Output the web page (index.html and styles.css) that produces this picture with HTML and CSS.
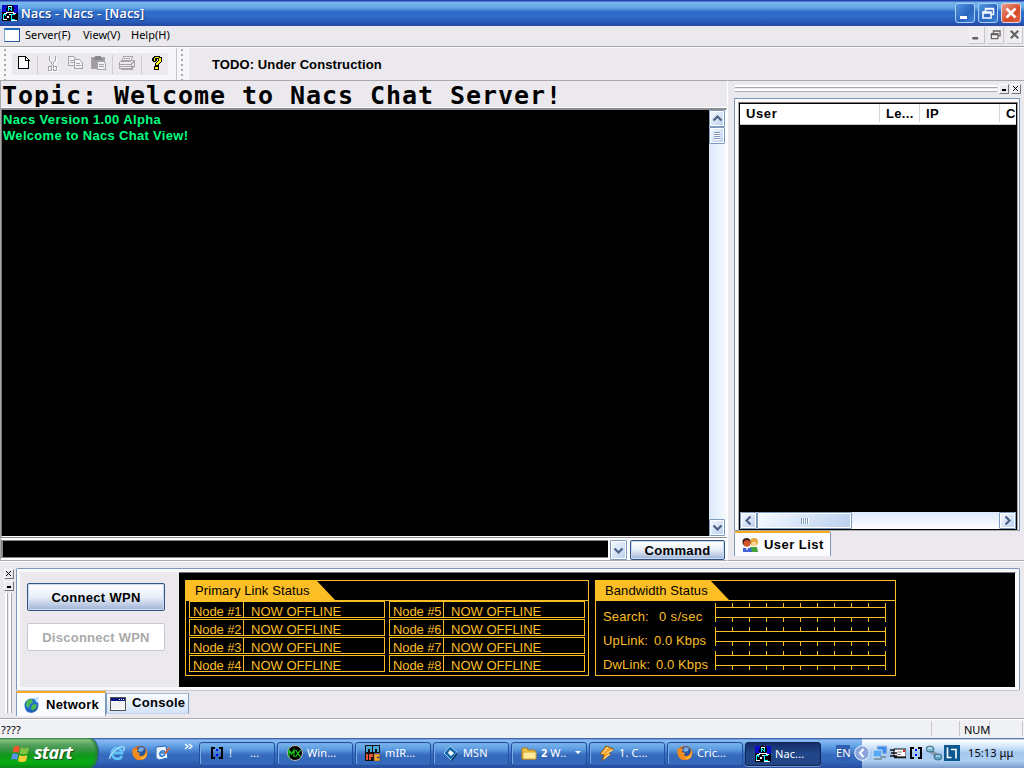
FILE: index.html
```html
<!DOCTYPE html>
<html lang="en">
<head>
<meta charset="utf-8">
<title>Nacs - Nacs - [Nacs]</title>
<link rel="stylesheet" href="styles.css">
</head>
<body>
<svg width="0" height="0" class="defs">
  <defs>
    <symbol id="nacs" viewBox="0 0 16 16"><rect width="16" height="16" fill="#0a0ac8"/><path d="M0 12h16v4H0zM5 0h6v2h1v4h-1v4H6V6H4V3h1z" fill="#000"/><path d="M0 7h5l2 3h3l2-2h4v8H0z" fill="#000"/><path d="M6 1h4v1H6zM4 7h8v1H4zM2 8h3v1H2zM11 8h3v1h-3zM1 14h4v1H1zM9 15h6v1H9zM7 9h2v1H7zM5 11h2v2H5z" fill="#fff"/><path d="M6 2h1v4H6zM7 3h1v1H7zM8 4h1v1H8zM9 2h1v4H9zM1 9h3v1H2v4H1zM3 10h1v1H3zM9 9h4v1h-3v4h3v1H9z" fill="#0ff"/></symbol>
    <symbol id="ff" viewBox="0 0 16 16"><circle cx="8" cy="8" r="7.3" fill="#e66b12"/><circle cx="9" cy="6.3" r="5" fill="#25579f"/><path d="M8 2l4 1-1 3-3 1-2-2z" fill="#77aae0"/><path d="M1 3l2 1 3 0-1 3 3 1-1 2c3 3 7 0 7-6 3 5 0 11-6 11C2 15-1 9 1 3z" fill="#f28b1d"/><path d="M13 4c3 5 0 9-5 9 4 3 9-3 5-9z" fill="#ffd24a"/></symbol>
    <symbol id="brk" viewBox="0 0 16 16"><path d="M2 2h4v2H4v8h2v2H2zM10 2h4v12h-4v-2h2V4h-2z" fill="#000"/><path d="M7 4h2v2H7zM7 9h2v2H7z" fill="#00f"/></symbol>
    <symbol id="min" viewBox="0 0 18 18"><path d="M4 12h7v3H4z" fill="currentColor"/></symbol>
    <symbol id="rest" viewBox="0 0 18 18"><path d="M6.500 8V4.500h8v6H12M6 5h9" fill="none" stroke="currentColor" stroke-width="1.500"/><path d="M4 8h8v6H4zM4 9h8" fill="none" stroke="currentColor" stroke-width="1.500"/></symbol>
    <symbol id="cls" viewBox="0 0 18 18"><path d="M4.500 4.500l9 9M13.500 4.500l-9 9" stroke="currentColor" stroke-width="2.600"/></symbol>
    <symbol id="up" viewBox="0 0 15 15"><path d="M3.500 9.500l4-4 4 4" fill="none" stroke="#4d6185" stroke-width="2.200"/></symbol>
    <symbol id="gauge" viewBox="0 0 171 19"><path d="M.5 0v19M170.500 0v19M0 4.500h171M0 14.500h171M17.500 0v5M34.500 0v5M51.500 0v5M68.500 0v5M85.500 0v5M102.500 0v5M119.500 0v5M136.500 0v5M153.500 0v5M17.500 14v5M34.500 14v5M51.500 14v5M68.500 14v5M85.500 14v5M102.500 14v5M119.500 14v5M136.500 14v5M153.500 14v5" stroke="#fbbe24" fill="none"/></symbol>
  </defs>
</svg>
<div class="screen">
  <header class="titlebar">
    <svg class="i16"><use href="#nacs"/></svg><span class="title">Nacs - Nacs - [Nacs]</span>
    <div class="winbtns"><b><svg><use href="#min"/></svg></b><b><svg><use href="#rest"/></svg></b><b class="red"><svg><use href="#cls"/></svg></b></div>
  </header>
  <nav class="menubar">
    <i class="doc"></i><span class="m1">Server(F)</span><span class="m2">View(V)</span><span class="m3">Help(H)</span>
    <div class="mdi"><b><svg><use href="#min"/></svg></b><b><svg><use href="#rest"/></svg></b><b><svg><use href="#cls"/></svg></b></div>
  </nav>
  <div class="toolbar">
    <div class="tools">
      <i class="dots"></i>
      <svg width="156" height="22" class="toolicons" shape-rendering="crispEdges">
        <path d="M6.500 3.500h7l3 3v9h-10z" fill="#fff" stroke="#000"/><path d="M13.500 3v4h4" fill="none" stroke="#000"/>
        <path d="M25.500 2v19M100.500 2v19M129.500 2v19" stroke="#cfcdd2"/>
        <g fill="none" stroke="#fff" transform="translate(1 1)"><path d="M37.500 3v4l4 6M43.500 3v4l-4 6M36.500 13.500h3v4h-3zM41.500 13.500h3v4h-3z"/></g>
        <g fill="none" stroke="#a6a4a8"><path d="M37.500 3v4l4 6M43.500 3v4l-4 6M36.500 13.500h3v4h-3zM41.500 13.500h3v4h-3z"/>
        <path d="M56.500 3.500h5l3 3v6h-8zM58 7.500h4M58 9.500h4" fill="#f2f1f4"/><path d="M62.500 6.500h5l3 3v6h-8zM64 10.500h4M64 12.500h5" fill="#f2f1f4"/>
        <path d="M79.500 4.500h13v11h-13z" fill="#a09ea2"/><path d="M83 3.500h6M82 5.500h8" stroke="#8a888c" stroke-width="2"/><path d="M85.500 8.500h6l2 2v6h-8zM87 11.500h5M87 13.500h5" fill="#f2f1f4"/>
        <path d="M111.500 3.500h9l-2 5h-9zM107.500 9.500l3-2h12l-3 4h-12zv6h12v-6M107 13.500h15M119.500 16l3-3v-5M112 5.500h6M109 16.500h12" fill="#efedf1"/></g>
        <path d="M142 3h6v1h2v5h-1v1h-1v1h-1v2h-4v-3h1V9h1V8h1V6h-1v2h-1v1h-3V8h-1V5h1V4h1zM142 13h5v4h-5z" fill="#000"/><path d="M142 4h5v1h2v4h-1v1h-1v1h-1v1h-2v-2h1V9h1V8h1V5h-4v3h-1V5h1zM143 14h3v2h-3z" fill="#ff0"/>
      </svg>
    </div>
    <i class="dots"></i><span class="todo">TODO: Under Construction</span>
  </div>
  <main class="main">
    <section class="chat">
      <h1 class="topic">Topic: Welcome to Nacs Chat Server!</h1>
      <div class="viewrow">
        <div class="log"><p class="l1">Nacs Version 1.00 Alpha</p><p class="l2">Welcome to Nacs Chat View!</p></div>
        <div class="vscroll"><i class="sb"><svg><use href="#up"/></svg></i><i class="sb thumb"></i><i class="sb end"><svg class="down"><use href="#up"/></svg></i></div>
      </div>
      <div class="cmdrow"><div class="input"></div><i class="sb combo"><svg class="down"><use href="#up"/></svg></i><button class="xp command">Command</button></div>
    </section>
    <aside class="users">
      <div class="grip"><div class="lines"></div><i class="tiny mn"></i><i class="tiny"><svg viewBox="0 0 10 10"><path d="M2 2l5 5M7 2l-5 5" stroke="#000"/></svg></i></div>
      <div class="upanel"><div class="ulist">
        <div class="cols"><span class="c1">User</span><span class="c2">Le...</span><span class="c3">IP</span><span class="c4">C</span></div>
        <div class="empty"></div>
        <div class="hscroll"><i class="sb"><svg class="left"><use href="#up"/></svg></i><i class="sb hthumb"></i><i class="sb end"><svg class="right"><use href="#up"/></svg></i></div>
      </div></div>
      <div class="tab utab"><svg class="i16" viewBox="0 0 16 16"><path d="M8 10h7l1 5H8z" fill="#43a33a"/><circle cx="12" cy="5" r="4" fill="#e6a83c"/><circle cx="12" cy="7" r="2.500" fill="#ffd68e"/><path d="M1 11h8l1 4H1z" fill="#3d62d8"/><circle cx="4.500" cy="5" r="4" fill="#442019"/><circle cx="5" cy="6.500" r="3.300" fill="#d4552a"/><path d="M4 11l1 3 1-3z" fill="#fff"/></svg><span>User List</span></div>
    </aside>
  </main>
  <section class="dock">
    <div class="sidegrip"><i class="tiny"><svg viewBox="0 0 10 10"><path d="M2 2l5 5M7 2l-5 5" stroke="#000"/></svg></i><i class="tiny mn"></i><div class="vlines"></div></div>
    <div class="dockbody">
      <div class="dpanel">
        <div class="btns"><button class="xp">Connect WPN</button><button class="xp off">Disconnect WPN</button></div>
        <div class="status">
          <div class="box link">
            <div class="head"><svg width="150" height="19"><path d="M0 0h131l18 19H0z" fill="#fbbe24"/></svg><span>Primary Link Status</span></div>
            <div class="nodes">
              <div><span>Node #1</span><em>NOW OFFLINE</em></div><div><span>Node #5</span><em>NOW OFFLINE</em></div>
              <div><span>Node #2</span><em>NOW OFFLINE</em></div><div><span>Node #6</span><em>NOW OFFLINE</em></div>
              <div><span>Node #3</span><em>NOW OFFLINE</em></div><div><span>Node #7</span><em>NOW OFFLINE</em></div>
              <div><span>Node #4</span><em>NOW OFFLINE</em></div><div><span>Node #8</span><em>NOW OFFLINE</em></div>
            </div>
          </div>
          <div class="box band">
            <div class="head"><svg width="136" height="19"><path d="M0 0h115l18 19H0z" fill="#fbbe24"/></svg><span>Bandwidth Status</span></div>
            <div class="rates">
              <div><span class="k s">Search:</span><span class="v1">0 s/sec</span><svg><use href="#gauge"/></svg></div>
              <div><span class="k">UpLink:</span><span class="v2">0.0 Kbps</span><svg><use href="#gauge"/></svg></div>
              <div><span class="k">DwLink:</span><span class="v3">0.0 Kbps</span><svg><use href="#gauge"/></svg></div>
            </div>
          </div>
        </div>
      </div>
      <div class="tabs">
        <div class="tab net"><svg class="i16" viewBox="0 0 16 16"><circle cx="7.500" cy="8.500" r="7" fill="#1f6ed0"/><path d="M3 3l5-1 1 4-3 1-1 4-3-2zM8 8l4-1 1 4-4 4-2-3z" fill="#4dbb52"/><path d="M9 1l6-1-2 6c-1-2-2-3-4-5z" fill="#b8e4fa"/><path d="M1 10c3 4 8 4 13-1 0 4-3 7-7 7S1 13 1 10z" fill="#174fae" fill-opacity=".6"/></svg><span>Network</span></div>
        <div class="tab con"><svg width="16" height="14" shape-rendering="crispEdges"><path d="M.5.500h15v13H.5z" fill="#fff" stroke="#555"/><path d="M1 1h14v3H1z" fill="#0a1580"/><path d="M9 2h1v1H9zM11 2h1v1h-1zM13 2h1v1h-1z" fill="#fff"/><path d="M1 5h14v7H1z" fill="#f3f3f3"/></svg><span>Console</span></div>
      </div>
    </div>
  </section>
  <div class="statusbar"><span class="q">????</span><i></i><span class="num">NUM</span><i class="last"></i></div>
  <footer class="taskbar">
    <div class="start"><svg width="19" height="19" viewBox="0 0 19 19"><path d="M3 3q3-2 6 0L7.500 9q-3-2-6 0z" fill="#f0562a"/><path d="M10 3.500q3 2 8 0L16.500 9.500q-4 2-8 0z" fill="#81c53c"/><path d="M1.300 10.500q3-2 6 0L6 16q-3-2-6 0z" fill="#5b8ff0"/><path d="M8.300 11q3 2 8 0L15 17q-4 2-8 0z" fill="#fbcf35"/></svg><span>start</span></div>
    <div class="quick">
      <svg class="i16" viewBox="0 0 16 16"><path d="M13 11c-3 5-10 3-10-3s9-7 10 0H5" fill="none" stroke="#62c2f5" stroke-width="2.800"/><path d="M1 14C-1 10 11 0 15 2c1 1 0 3-1 4" fill="none" stroke="#a8defc" stroke-width="1.300"/></svg>
      <svg class="i16"><use href="#ff"/></svg>
      <svg class="i16" viewBox="0 0 16 16"><path d="M1 2l10-1 2 12-9 2-3-2z" fill="#e9f4ff" stroke="#2a68b8"/><path d="M10 9c-2 4-6 2-5-1s5-3 5 0H6" fill="none" stroke="#2878cc" stroke-width="1.600"/><path d="M9 8l5-6 1 1-4 6z" fill="#d8642b"/></svg>
      <svg width="9" height="8" class="more"><path d="M1 1l3 2.500L1 6M5 1l3 2.500L5 6" fill="none" stroke="#fff" stroke-width="1.400"/></svg>
    </div>
    <div class="tasks">
      <div class="task"><svg class="i16"><use href="#brk"/></svg><span>!</span><span class="gap">...</span></div>
      <div class="task"><svg class="i16" viewBox="0 0 16 16"><circle cx="8" cy="8" r="7.500" fill="#000" stroke="#bbb"/><path d="M2 12V5l2.500 4L7 5v7M8.500 5l5 7M13.500 5l-5 7" fill="none" stroke="#18d818" stroke-width="1.200"/></svg><span>Win...</span></div>
      <div class="task"><svg class="i16" viewBox="0 0 16 16"><path d="M0 0h15v8H0z" fill="#111"/><path d="M1 1h6v6H5V4H3v3H1zM8 1h6v6h-2V4h-2v3H8z" fill="#4aa9d8"/><path d="M0 8h9v8H0z" fill="#111"/><path d="M1 9h2v6H1zM4 9h4v3H6v3H4z" fill="#e85236"/><path d="M9 9h6v3h-3v1h3v3H9z" fill="#f0a92e" stroke="#633" stroke-width=".5"/></svg><span>mIR...</span></div>
      <div class="task"><svg class="i16" viewBox="0 0 16 16"><path d="M7 1l7 6-6 8-7-7z" fill="#1567a8" stroke="#9ed8f7"/><path d="M7 5l4 3-3 3-3-3z" fill="#fff"/><path d="M8 15l6-8v3l-5 6z" fill="#0c3765"/></svg><span>MSN</span></div>
      <div class="task"><svg class="i16" viewBox="0 0 16 16"><path d="M1 3h5l1 2h7v9H1z" fill="#f2c64c" stroke="#ad7b16"/><path d="M2 7h13v7H2z" fill="#ffe99a" stroke="#d4a32f"/></svg><span><strong>2</strong> W..</span><i class="arrow"></i></div>
      <div class="task"><svg class="i16" viewBox="0 0 16 16"><path d="M7 1l8 3-5 4 2 1-9 7 2-6-4-1z" fill="#f5a52a" stroke="#7d5a2c"/><path d="M9 2l-6 7M14 5l-6 3M11 9l-6 5" stroke="#fff0b8"/></svg><span>1. C...</span></div>
      <div class="task"><svg class="i16"><use href="#ff"/></svg><span>Cric...</span></div>
      <div class="task active"><svg class="i16"><use href="#nacs"/></svg><span>Nac...</span></div>
    </div>
    <div class="lang"><span>EN</span></div>
    <div class="tray">
      <svg class="i16 chev" viewBox="0 0 16 16"><circle cx="8" cy="8" r="7.300" fill="#8ba5dc" stroke="#e9f4ff"/><path d="M9.500 4L6 8l3.500 4" fill="none" stroke="#fff" stroke-width="2"/></svg>
      <svg class="i16" viewBox="0 0 16 16"><path d="M5 1h10v8H5z" fill="#3e8ce8" stroke="#b9ccdf"/><path d="M1 5h9v7H1z" fill="#55a9f8" stroke="#d8e3ec"/><path d="M2 14h8M8 12h6" stroke="#8299b0" stroke-width="2"/></svg>
      <svg class="i16" viewBox="0 0 16 16"><path d="M4 4h12v8H4z" fill="#fff" stroke="#111"/><path d="M0 5h5M1 8h6M0 11h7M4 12.500h12" stroke="#111" stroke-width="1.500"/><path d="M7 7h5M7 9.500h4" stroke="#888"/><path d="M13 5h2v2h-2z" fill="#d4202b"/></svg>
      <svg class="i16"><use href="#brk"/></svg>
      <svg class="i16" viewBox="0 0 16 16"><path d="M4 5l7 6" stroke="#7f9ba8" stroke-width="4"/><ellipse cx="4" cy="4" rx="4" ry="3" fill="#7cb9d5" stroke="#466a7b"/><ellipse cx="12" cy="12" rx="4" ry="3" fill="#55a3c5" stroke="#466a7b"/><path d="M2 3h4M10 11h4" stroke="#e5f8ff"/></svg>
      <svg class="i16" viewBox="0 0 16 16"><path d="M0 0h16v16H0z" fill="#0d5790"/><path d="M3.500 2.500v10h4M7 4.500h5v9" fill="none" stroke="#fff" stroke-width="1.600"/></svg>
      <time>15:13 μμ</time>
    </div>
  </footer>
</div>
</body>
</html>
```
FILE: styles.css
```css
*{box-sizing:border-box}
body{margin:0;background:#ebe9ed;font:bold 13px "Liberation Sans",Arial,sans-serif;letter-spacing:.35px;color:#000}
.defs{display:block;width:0;height:0;position:absolute}
i,em{font-style:normal}
svg{display:block;flex:none}
.screen{width:1024px;height:768px;overflow:hidden;display:flex;flex-direction:column}
.i16{width:16px;height:16px}
.titlebar{height:26px;flex:none;display:flex;align-items:center;padding:0 3px 0 2px;background:linear-gradient(#2442ae 0,#2442ae 1px,#75b6ee 2px,#69aae9 7px,#5095de 9px,#2e6ac5 12px,#2e6dc9 16px,#2858b6 22px,#2449a4)}
.title{color:#fff;font:500 12.5px "Noto Sans","DejaVu Sans",sans-serif;letter-spacing:.35px;margin-left:3px;text-shadow:1px 1px #173786,.3px 0 #fff}
.winbtns{margin-left:auto;display:flex;gap:3px;height:20px;margin-top:-1px}
.winbtns b{width:20px;height:20px;border:1px solid #a9cdf3;border-radius:3px;background:linear-gradient(135deg,#5295df,#2865bf 60%,#3d83d7);color:#fff}
.winbtns svg{width:18px;height:18px}
.winbtns .red{background:linear-gradient(135deg,#e7988c,#d84a25 60%,#dc6547);border-color:#e9d6dd}
.menubar{height:21px;margin-bottom:1px;flex:none;display:flex;align-items:flex-start;border-bottom:1px solid #a5a3a7;box-shadow:0 1px #fff;padding:1px 1px 0 4px;font:11px/15px "Noto Sans",sans-serif;letter-spacing:0}
.doc{width:16px;height:14px;margin-top:1px;background:#fff;border:1px solid #79a7d5;border-top:2px solid #1f69bd;border-right-color:#1f4f9b;border-bottom-color:#2b5ca0}
.menubar span{white-space:nowrap}
.m1{margin-left:5px;width:58px}.m2{width:48px}
.mdi{display:flex;margin-left:auto;gap:3px}
.mdi b{width:16px;height:17px;background:#f0eef2;border-right:1px solid #c8c6ca;border-bottom:1px solid #c8c6ca;color:#65635f}
.mdi svg{width:15px;height:15px}
.toolbar{height:33px;flex:none;display:flex;border-bottom:1px solid #aaa8ac;align-items:stretch}
.tools{width:177px;display:flex;background:#f7f6f9;border-right:1px solid #c9c7cc;align-items:center}
.toolicons{background:#ebe9ed}
.dots{width:12px;flex:none;background:radial-gradient(circle at 5px 3px,#aaa 1px,transparent 1.500px) 0 4px/12px 5px repeat-y;background-color:#f7f6f9;align-self:stretch}
.tools .dots{background-color:transparent}
.todo{margin-left:23px;line-height:34px;letter-spacing:.1px;white-space:nowrap}
.main{height:480px;flex:none;display:flex}
.chat{width:727px;display:flex;flex-direction:column;border-left:1px solid #aaa8ac}
.topic{margin:0;height:27px;overflow:hidden;font:bold 25px/30px "DejaVu Sans Mono",monospace;letter-spacing:.95px;padding-left:1px;white-space:nowrap;border-bottom:1px solid #fff}
.viewrow{height:429px;display:flex;border:1px solid #918f93;border-top:2px solid #8f8d91;border-left:1px solid #777;border-bottom:1px solid #fff;border-right:1px solid #fff}
.log{flex:1;background:#000;color:#00ff80;padding:2px 0 0 1px;line-height:16px}
.log p{margin:0;white-space:nowrap}
.l1{letter-spacing:.36px}.l2{letter-spacing:.31px}
.vscroll{width:17px;display:flex;flex-direction:column;background:linear-gradient(90deg,#dbe8fb,#f5faff);gap:0}
.sb{display:flex;align-items:center;justify-content:center;flex:none;width:16px;height:17px;border:1px solid #7d9abf;border-radius:1px;background:linear-gradient(135deg,#f5faff,#b9cfee);box-shadow:inset 0 0 0 1px #fff}
.sb svg{width:15px;height:15px}
.down{transform:rotate(180deg)}.left{transform:rotate(-90deg)}.right{transform:rotate(90deg)}
.thumb::after{content:"";width:6px;height:8px;background:repeating-linear-gradient(#7f96b9 0 1px,#fff 1px 2px)}
.vscroll .end{margin-top:auto}
.cmdrow{height:24px;display:flex;padding:2px 2px 2px 0;background:#fff;border-top:1px solid #8f8d91;border-bottom:1px solid #aaa8ac}
.input{width:607px;background:#000;border:1px solid #888;border-width:1px 0 1px 2px}
.combo{margin-left:2px;height:20px;width:17px}
.xp{font:inherit;letter-spacing:.35px;color:#000;border:1.500px solid #315584;border-radius:2px;background:linear-gradient(#fff,#e8eef8 50%,#9eb3d6);box-shadow:inset 0 0 0 1px #cbd9ee;padding:0;white-space:nowrap}
.command{margin-left:auto;width:95px;height:20px}
.users{width:297px;border-left:1px solid #fff;border-bottom:1px solid #aaa8ac;padding:3px 4px 0 6px;display:flex;flex-direction:column}
.grip{height:14px;display:flex;gap:2px;padding-left:1px;margin-right:-1px}
.lines{flex:1;height:7px;background:linear-gradient(#fff 0 2px,#aaa 2px 3px,transparent 3px 4px,#fff 4px 6px,#aaa 6px 7px);margin-top:1px}
.tiny{width:10px;height:10px;flex:none;display:flex;align-items:center;justify-content:center;border:1px solid #fff;border-right-color:#777;border-bottom-color:#777}
.tiny svg{width:10px;height:10px}
.mn::after{content:"";width:4px;height:2px;background:#000;margin-top:2px}
.upanel{height:433px;border:1px solid #7d98ba;padding:3px 1px 0 3px;background:#fbfbfd}
.ulist{height:429px;border:1px solid #aaa;border-top-color:#777;display:flex;flex-direction:column;background:#000;padding:1px}
.cols{height:21px;display:flex;background:#fff;border-bottom:1px solid #c9c7cc;line-height:20px;overflow:hidden}
.cols span{border-right:1px solid #d6d4d8;padding-left:6px;flex:none;height:18px}
.c1{width:140px;letter-spacing:.6px}.c2{width:40px}.c3{width:80px}.cols .c4{border:0;padding-left:6px}
.empty{flex:1}
.hscroll{height:17px;display:flex;background:linear-gradient(#dbe8fb,#fff)}
.hscroll .sb{width:17px}.hscroll .hthumb{width:95px}.hthumb::after{content:"";width:8px;height:6px;background:repeating-linear-gradient(90deg,#8299bb 0 1px,#fff 1px 2px)}
.hscroll .end{margin-left:auto}
.tab{display:flex;align-items:center;border:1px solid #7d9abf;border-width:0 1px 0 1px;background:#fbfcff;white-space:nowrap}
.utab{width:97px;height:25px;border-top:2px solid #f6ab24;padding-left:7px;gap:6px;letter-spacing:.45px;border-radius:2px 2px 0 0}
.dock{height:157px;flex:none;display:flex;border-top:1px solid #fff;padding:6px 4px 0 0}
.sidegrip{width:16px;padding:1px 0 0 4px;display:flex;flex-direction:column;gap:2px}
.vlines{width:7px;height:120px;margin-left:1px;background:linear-gradient(90deg,#fff 0 2px,#aaa 2px 3px,transparent 3px 4px,#fff 4px 6px,#aaa 6px 7px)}
.dockbody{flex:1}
.dpanel{height:123px;border:1px solid #7d98ba;border-bottom-color:#c7c5ca;display:flex;padding:3px 3px 2px 3px;border-radius:2px;box-shadow:inset 0 0 0 3px #f8f8fb}
.btns{width:159px;padding:11px 0 0 7px;display:flex;flex-direction:column;gap:12px}
.btns .xp{width:138px;height:28px;letter-spacing:.3px}
.btns .off{color:#aaa;background:#fff;border:1px solid #cac8cc;box-shadow:none;letter-spacing:.25px}
.status{flex:1;background:#000;border-top:1px solid #777;border-bottom:1px solid #fff;padding:7px 0 0 6px;display:flex;gap:6px;font-weight:normal;color:#fbbe24;letter-spacing:.1px;border-right:1px solid #fff}
.box{height:96px;border:1px solid #fbbe24}
.link{width:404px}.band{width:301px}
.head{height:20px;border-bottom:1px solid #fbbe24;display:grid;color:#000}
.head svg,.head span{grid-area:1/1}
.head span{padding-left:9px;line-height:19px}
.nodes{display:grid;grid-template-columns:196px 196px;column-gap:4px;row-gap:1px;padding:0 0 0 3px}
.nodes div{display:flex;height:17px;border:1px solid #fbbe24;overflow:hidden;line-height:20px;white-space:nowrap}
.nodes span{width:54px;padding-left:3px;border-right:1px solid #fbbe24;letter-spacing:-.1px}
.nodes em{padding-left:7px;letter-spacing:0}
.rates{padding:2px 0 0 7px;display:flex;flex-direction:column;gap:5px}
.rates div{height:19px;display:flex;line-height:27px;white-space:nowrap}
.rates svg{width:171px;height:19px;margin-left:auto;margin-right:9px}
.k{width:50px;letter-spacing:.15px}.k.s{width:56px}.v1{letter-spacing:.35px}.v2{padding-left:1px}.v3{padding-left:3px}
.tabs{display:flex;align-items:flex-start}
.net{height:25px;width:90px;border-top:2px solid #f6ab24;padding-left:7px;gap:6px;letter-spacing:.25px}
.con{height:21px;width:83px;margin-top:2px;border-top:1px solid #a4b9d5;padding-left:3px;gap:6px;background:linear-gradient(#fbfcff,#d3e2f7);border-bottom:1px solid #c9d6e8;letter-spacing:.3px}
.con span{margin-top:-2px}
.statusbar{height:20px;flex:none;display:flex;background:#f0f1f5;border-top:1px solid #aaa8ac;box-shadow:inset 0 1px #fff;font:11px/20px "Noto Sans",sans-serif;letter-spacing:-.1px;padding:2px 0}
.q{width:932px;padding-left:1px;border-right:1px solid #c9c7cc;letter-spacing:.2px}
.statusbar i{width:28px;border-right:1px solid #c9c7cc}.num{width:30px;border-right:1px solid #c9c7cc;padding-left:4px}
.statusbar .q,.statusbar .num{line-height:18px}.statusbar .last{width:33px}
.taskbar{height:30px;flex:none;display:flex;background:linear-gradient(#234b98 0,#8abaf2 2px,#70aaea 6px,#5595de 10px,#3569bd 17px,#3569bd 22px,#264d9f);color:#fff;font:11px "Noto Sans",sans-serif;letter-spacing:.1px}
.start{width:98px;display:flex;align-items:center;padding-left:11px;gap:4px;background:linear-gradient(#35803a 0,#87c382 2px,#5ba560 6px,#3e9649 11px,#10981a 17px,#06ac15 24px,#078c10);border-radius:0 9px 9px 0/0 14px 14px 0;box-shadow:inset -2px 0 2px #287e3a,1px 0 #2857a5}
.start span{font:italic bold 18px "Open Sans",sans-serif;letter-spacing:-.65px;text-shadow:1px 1px 1px #174e1c;margin-top:-2px}
.quick{width:101px;display:flex;align-items:center;gap:7px;padding:0 0 1px 11px}
.more{margin-left:6px;margin-top:-12px}
.tasks{display:flex;gap:2px;padding-top:4px}
.task{width:76px;height:24px;border:1px solid #244f9f;border-radius:3px;display:flex;align-items:center;padding:0 0 3px 9px;gap:4px;background:linear-gradient(#7ab5ee,#5a9ae0 30%,#366abc 55%,#3468ba);box-shadow:inset 1px 1px #7aaae3;white-space:nowrap}
.gap{padding-left:14px}
.active{background:linear-gradient(#152d6a,#214789 50%,#204384);box-shadow:0 1px #7999ce;border-color:#122451;padding-bottom:1px}
.arrow{border:3px solid transparent;border-top-color:#fff;margin:3px 0 0 5px}
.lang{width:41px;padding:7px 0 0 15px}.lang span{display:block;background:#315eb0;width:14px;height:16px;line-height:16px}
.tray{flex:1;display:flex;align-items:center;gap:2px;padding-bottom:1px;background:linear-gradient(#234b98 0,#fff 2px,#d0e5fb 9px,#a3c7ef 15px,#adcff3 23px,#799dcc);color:#000}
.chev{margin-left:-8px}
.tray time{margin-left:6px;margin-top:-1px;white-space:nowrap}
```
